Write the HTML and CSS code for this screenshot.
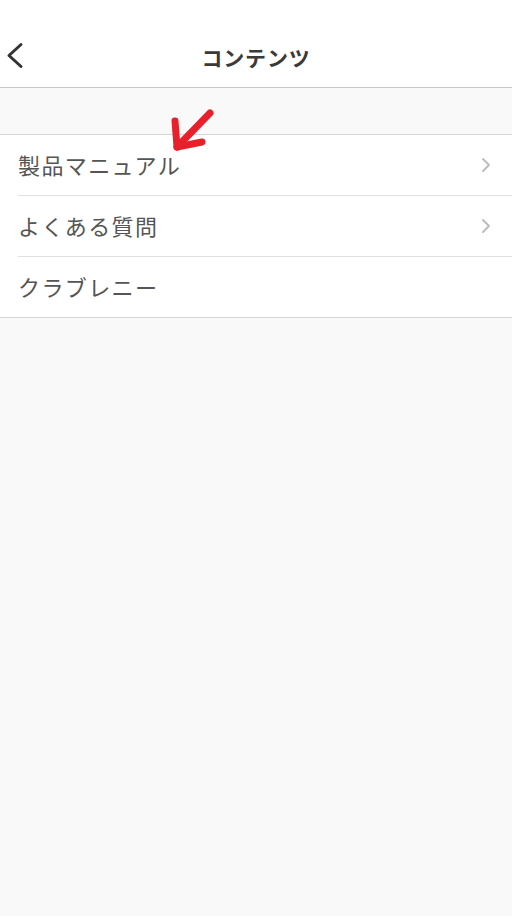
FILE: index.html
```html
<html>
    <head>
        <title>コンテンツ</title>
        <link rel="stylesheet" href="styles.css">
    </head>
    <body>
        <div id="header">
            <div class="backButton">
                <svg width="20" height="30" viewBox="0 0 20 30">
                    <polyline points="15,2.5 3,13.5 15,24.5" fill="none" stroke="#333" stroke-width="3" stroke-linecap="round" stroke-linejoin="round"/>
                </svg>
            </div>
            <div class="title">コンテンツ</div>
        </div>
        <div class="spacer"></div>
        <ul id="menu">
            <li class="menuItem">
                <span class="label">製品マニュアル</span>
                <span class="chevron">
                    <svg width="12" height="18" viewBox="0 0 12 18">
                        <polyline points="3,3 9,9 3,15" fill="none" stroke="#bdbdbd" stroke-width="2" stroke-linecap="round" stroke-linejoin="round"/>
                    </svg>
                </span>
            </li>
            <li class="menuItem">
                <span class="label">よくある質問</span>
                <span class="chevron">
                    <svg width="12" height="18" viewBox="0 0 12 18">
                        <polyline points="3,3 9,9 3,15" fill="none" stroke="#bdbdbd" stroke-width="2" stroke-linecap="round" stroke-linejoin="round"/>
                    </svg>
                </span>
            </li>
            <li class="menuItem">
                <span class="label">クラブレニー</span>
            </li>
        </ul>
        <!-- red hand-drawn arrow over the list -->
        <svg class="markArrow" width="60" height="50" viewBox="0 0 60 50">
            <g fill="none" stroke="#e8202b" stroke-width="7" stroke-linecap="round" stroke-linejoin="round">
                <path d="M50,5 L17,39"/>
                <path d="M15,13 L17,39 L42,34"/>
            </g>
        </svg>
    </body>
</html>
```
FILE: styles.css
```css
body{
    margin: 0;
    background: #f9f9f9;
    font-family: "Noto Sans CJK JP", "Noto Sans", sans-serif;
}
#header{
    height: 88px;
    background: #fff;
    border-bottom: 1px solid #c8c8c8;
    display: flex;
    align-items: center;
    justify-content: center;
    position: relative;
    padding-top: 26px;
    box-sizing: border-box;
}
.backButton{
    position: absolute;
    left: 6px;
    top: 42px;
}
.title{
    font-size: 21px;
    font-weight: bold;
    color: #3a3a3a;
    letter-spacing: 0.8px;
}
.spacer{
    height: 46px;
    border-bottom: 1px solid #d6d6d6;
}
#menu{
    list-style: none;
    margin: 0;
    padding: 0 0 0 18px;
    background: #fff;
    border-bottom: 1px solid #d6d6d6;
}
.menuItem{
    height: 60px;
    display: flex;
    align-items: center;
    justify-content: space-between;
    padding-right: 20px;
    border-bottom: 1px solid #e0e0e0;
}
.menuItem:last-child{
    border-bottom: none;
}
.label{
    font-size: 22px;
    color: #555;
    letter-spacing: 1.4px;
    padding-bottom: 2px;
}
.chevron{
    display: flex;
    align-items: center;
}
.markArrow{
    position: absolute;
    left: 160px;
    top: 108px;
}
```
